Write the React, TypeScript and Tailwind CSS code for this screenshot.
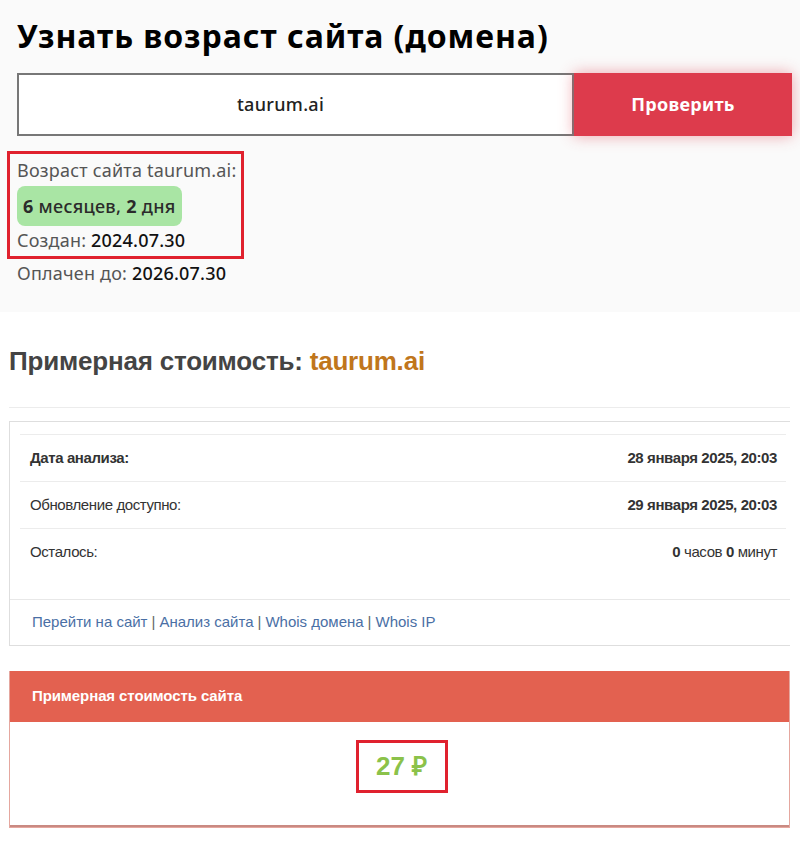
import React from 'react';

const rows = [
  { label: 'Дата анализа:', boldLabel: true, value: <b>28 января 2025, 20:03</b>, last: false },
  { label: 'Обновление доступно:', boldLabel: false, value: <b>29 января 2025, 20:03</b>, last: false },
  {
    label: 'Осталось:',
    boldLabel: false,
    value: (
      <span>
        <b>0</b> часов <b>0</b> минут
      </span>
    ),
    last: true,
  },
];

const links = ['Перейти на сайт', 'Анализ сайта', 'Whois домена', 'Whois IP'];

export default function App() {
  return (
    <div className="w-[800px] h-[853px] bg-white overflow-hidden">
      {/* верхний блок: возраст домена */}
      <div className="h-[312px] bg-[#fafafa] pl-[17px] pr-[8px] pt-[16px] font-['Noto_Sans',sans-serif]">
        <h1 className="text-[32px] font-bold leading-[39px] text-black tracking-[0.95px]">
          Узнать возраст сайта (домена)
        </h1>
        <div className="flex mt-[18px] h-[63px]">
          <div className="flex-1 border-2 border-[#777] bg-white flex items-center justify-center pr-[30px] text-[18px] font-medium text-[#222] tracking-[0.3px]">
            taurum.ai
          </div>
          <button className="w-[218px] bg-[#dd3b4c] text-white font-bold text-[18px] tracking-[0.3px] shadow-[0_0_14px_rgba(221,59,76,0.45)]">
            Проверить
          </button>
        </div>
        <div className="mt-[15px] -ml-[10px] w-[237px] border-[3px] border-[#e0212e] pl-[7px] pt-[5px] pb-[2px]">
          <div className="text-[18px] leading-[22px] text-[#555] tracking-[0.2px]">Возраст сайта taurum.ai:</div>
          <div className="mt-[5px] inline-flex items-center h-[40px] px-[6px] rounded-[8px] bg-[#a9e5a4] text-[18px] font-medium text-[#2b2b2b] tracking-[0.3px]">
            <b>6</b>&nbsp;месяцев,&nbsp;<b>2</b>&nbsp;дня
          </div>
          <div className="text-[18px] leading-[28px] text-[#555] tracking-[0.2px]">
            Создан: <span className="text-[#111] font-medium">2024.07.30</span>
          </div>
        </div>
        <div className="text-[18px] leading-[28px] text-[#555] tracking-[0.2px]">
          Оплачен до: <span className="text-[#111] font-medium">2026.07.30</span>
        </div>
      </div>

      {/* нижний блок: стоимость */}
      <div className="pl-[9px] pr-[10px] font-['Liberation_Sans',Arial,sans-serif]">
        <h2 className="mt-[34px] text-[26px] font-bold leading-[30px] text-[#444] tracking-[-0.2px]">
          Примерная стоимость: <span className="text-[#c0761c]">taurum.ai</span>
        </h2>
        <div className="mt-[31px] border-t border-[#ececec]" />
        <div className="mt-[13px] border border-r-0 border-[#dedede]">
          <div className="ml-[10px] mr-[4px] mt-[12px] border-t border-[#ececec]">
            {rows.map((r) => (
              <div
                key={r.label}
                className={
                  'flex items-center justify-between h-[47px] pl-[10px] pr-[9px] text-[15px] text-[#333] tracking-[-0.4px] ' +
                  (r.last ? '' : 'border-b border-[#ececec]')
                }
              >
                <span className={r.boldLabel ? 'font-bold' : ''}>{r.label}</span>
                <span>{r.value}</span>
              </div>
            ))}
          </div>
          <div className="h-[24px] border-b border-[#e8e8e8]" />
          <div className="h-[45px] flex items-center px-[22px] text-[15px] text-[#4a6fa5]">
            {links.map((l, i) => (
              <React.Fragment key={l}>
                {i > 0 && <span className="text-[#666] mx-[4px]">|</span>}
                <span>{l}</span>
              </React.Fragment>
            ))}
          </div>
        </div>

        <div className="mt-[25px] border border-[#e5a79f] border-t-0">
          <div className="h-[51px] bg-[#e36150] flex items-center px-[22px] text-white font-bold text-[15px] tracking-[-0.1px]">
            Примерная стоимость сайта
          </div>
          <div className="h-[105px] flex justify-center pt-[18px] pl-[4px] border-b-2 border-[#c98a82]">
            <div className="w-[92px] h-[53px] border-[3px] border-[#e0212e] flex items-center justify-center text-[26px] font-bold text-[#8bc24a]">
              27 ₽
            </div>
          </div>
        </div>
      </div>
    </div>
  );
}
